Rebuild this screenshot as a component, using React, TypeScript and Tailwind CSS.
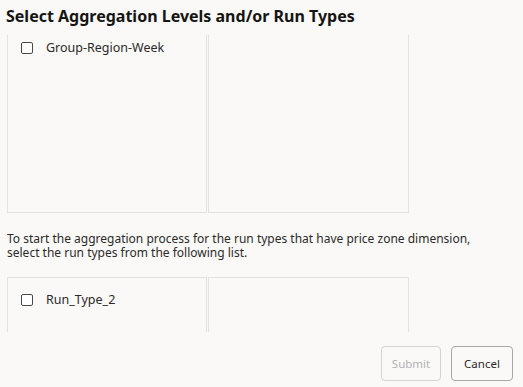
import React from 'react';

function Check({ label }: { label: string }) {
  return (
    <label className="flex items-center gap-[13px] pl-[13px] text-[12.5px] text-[#2b2a29]">
      <span className="w-[12px] h-[12px] border-[1.5px] border-[#4a4947] rounded-[2px] bg-white shrink-0" />
      <span>{label}</span>
    </label>
  );
}

export default function App() {
  return (
    <div
      className="w-[523px] h-[387px] bg-[#fbf9f8] overflow-hidden flex flex-col"
      style={{ fontFamily: '"Noto Sans", "Open Sans", sans-serif' }}
    >
      {/* title */}
      <h1 className="pl-[6px] pt-[4px] h-[35px] text-[16px] font-bold text-[#161513] leading-[24px]">
        Select Aggregation Levels and/or Run Types
      </h1>

      {/* aggregation levels */}
      <div className="ml-[7px] flex gap-[1px] h-[178px] shrink-0">
        <div className="w-[200px] border border-t-0 border-[#e4e2e0] pt-[4px]">
          <Check label="Group-Region-Week" />
        </div>
        <div className="w-[201px] border border-t-0 border-[#e4e2e0]" />
      </div>

      {/* info */}
      <p className="pl-[7px] mt-[19px] text-[12px] leading-[14px] text-[#2b2a29]">
        To start the aggregation process for the run types that have price zone dimension,
        <br />
        select the run types from the following list.
      </p>

      {/* run types */}
      <div className="ml-[7px] mt-[17px] flex gap-[1px] h-[55px] shrink-0">
        <div className="w-[200px] border border-b-0 border-[#e4e2e0] pt-[13px]">
          <Check label="Run_Type_2" />
        </div>
        <div className="w-[201px] border border-b-0 border-[#e4e2e0]" />
      </div>

      {/* footer */}
      <div className="flex justify-end gap-[10px] pr-[10px] mt-[14px]">
        <button
          disabled
          className="w-[60px] h-[35px] rounded-[4px] border border-[#d6d4d2] bg-[#fbf9f8] text-[11.5px] text-[#b4b2b0]"
        >
          Submit
        </button>
        <button className="w-[62px] h-[35px] rounded-[4px] border border-[#a9a7a5] bg-[#fbf9f8] text-[11.5px] text-[#2b2a29]">
          Cancel
        </button>
      </div>
    </div>
  );
}
